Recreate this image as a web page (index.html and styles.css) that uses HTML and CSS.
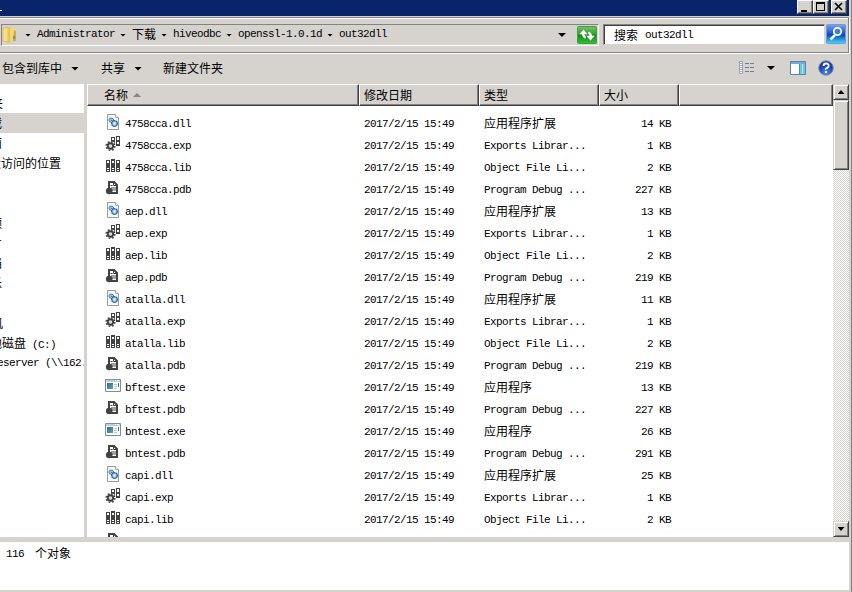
FILE: index.html
```html
<!DOCTYPE html>
<html lang="zh-CN">
<head>
<meta charset="utf-8">
<title>out32dll</title>
<link rel="stylesheet" href="styles.css">
</head>
<body>
<svg width="0" height="0" class="defs" aria-hidden="true">
  <symbol id="i-dll" viewBox="0 0 16 16">
    <path d="M2.5.5h8l3 3v12h-11z" fill="#f7f8fa" stroke="#9a9a9a"/>
    <path d="M10.500.5v3h3" fill="#fff" stroke="#aaa"/>
    <circle cx="6.300" cy="6.300" r="2.100" fill="#d6ebf8" stroke="#3c7bb8" stroke-width="1.400" stroke-dasharray="1.400 .4"/>
    <circle cx="9.500" cy="9.500" r="2.800" fill="#a9d0ee" stroke="#2868aa" stroke-width="1.500" stroke-dasharray="1.600 .4"/>
    <circle cx="6.300" cy="6.300" r=".7" fill="#2868aa"/><circle cx="9.500" cy="9.500" r="1" fill="#fff"/>
  </symbol>
  <symbol id="i-exp" viewBox="0 0 16 16">
    <path d="M6 1h4v7H8.500L6 6zM11 0h4v10h-4z" fill="#424242"/>
    <path d="M7 2h2v2H7zM12 1h2v3h-2zM12 6h2v2h-2z" fill="#fff"/>
    <circle cx="5.500" cy="10" r="5.100" fill="#fff"/>
    <circle cx="5.500" cy="10" r="4.200" fill="none" stroke="#424242" stroke-width="1.800" stroke-dasharray="1.700 1.600"/>
    <circle cx="5.500" cy="10" r="2.700" fill="#ddd" stroke="#424242" stroke-width="1.900"/>
  </symbol>
  <symbol id="i-lib" viewBox="0 0 16 16">
    <path d="M1 2h4v12H1zM6 1h4v13H6zM11 2h4v12h-4z" fill="#424242"/>
    <path d="M2 3h2v2H2zM7 3h2v2H7zM12 3h2v2h-2zM2 10h2v1H2zM7 10h2v1H7zM12 10h2v1h-2zM2 12h2v1H2zM7 12h2v1H7zM12 12h2v1h-2z" fill="#fff"/>
  </symbol>
  <symbol id="i-pdb" viewBox="0 0 16 16">
    <path d="M4 8V2h5l3 3v8H6" fill="#fff" stroke="#424242" stroke-width="2"/>
    <path d="M8.500 2v3.500h4M5.500 5.500h2M6 8h5M7 10h4" fill="none" stroke="#424242"/>
    <circle cx="4.200" cy="11" r="3.300" fill="#424242"/>
  </symbol>
  <symbol id="i-exe" viewBox="0 0 16 16">
    <path d="M.5 1.500h15v12H.5z" fill="#fff" stroke="#7d8d99"/>
    <path d="M1 2h14v2H1z" fill="#c3cdd6"/><path d="M10 2h1v1h-1zM12 2h2v1h-2z" fill="#fff"/>
    <path d="M2 5h6v6H2z" fill="url(#g-exe)"/>
    <path d="M9 6.500h3M9 8.500h3M9 10.500h3" stroke="#bdc6cf"/><path d="M13 5h1v4h-1z" fill="#35788e"/>
  </symbol>
  <defs>
    <linearGradient id="g-exe" x2="1" y2="1"><stop stop-color="#2f68a5"/><stop offset="1" stop-color="#5aae80"/></linearGradient>
    <linearGradient id="g-fold" x2="1"><stop stop-color="#ecd06a"/><stop offset="1" stop-color="#d9b038"/></linearGradient>
    <linearGradient id="g-green" x2="0" y2="1"><stop stop-color="#72c46c"/><stop offset=".45" stop-color="#2fa22c"/><stop offset=".5" stop-color="#118a14"/><stop offset="1" stop-color="#2bc52e"/></linearGradient>
    <linearGradient id="g-blue" x2="0" y2="1"><stop stop-color="#7fa3ea"/><stop offset=".45" stop-color="#2459cf"/><stop offset=".55" stop-color="#0b46c0"/><stop offset="1" stop-color="#3ee0fa"/></linearGradient>
    <radialGradient id="g-help" cy=".8"><stop stop-color="#4e8cf0"/><stop offset="1" stop-color="#1c3fae"/></radialGradient>
  </defs>
</svg>
<div class="window">
  <header class="titlebar">
    <span class="title-edge"></span>
    <button class="cap" aria-label="最小化"><svg width="14" height="12" viewBox="0 0 14 12"><path d="M3 9h6v2H3z"/></svg></button>
    <button class="cap" aria-label="最大化"><svg width="14" height="12" viewBox="0 0 14 12"><path d="M2 1h9v9H2zM3 3v6h7V3z" fill-rule="evenodd"/></svg></button>
    <button class="cap close" aria-label="关闭"><svg width="14" height="12" viewBox="0 0 14 12"><path d="M3 2l7 7M10 2L3 9" stroke="#000" stroke-width="1.700"/></svg></button>
  </header>
  <div class="navbar">
    <div class="address">
      <svg class="folder" width="16" height="18" viewBox="0 0 16 18"><path d="M1 2l5-1v15l-5-1z" fill="#f3df88" stroke="#d8b84c" stroke-width=".8"/><path d="M5.500 2L9 1v15l-3.500 1z" fill="url(#g-fold)"/><path d="M8 2h5v13l-5 1z" fill="#f1d672"/><path d="M12 4l2 1v10h-3z" fill="#d4ac3c"/><path d="M11 10h2v3h-2z" fill="#3f9ce0"/></svg>
      <i class="crumb-arrow first"></i><span class="la">Administrator</span>
      <i class="crumb-arrow"></i><span>下载</span>
      <i class="crumb-arrow"></i><span class="la">hiveodbc</span>
      <i class="crumb-arrow"></i><span class="la">openssl-1.0.1d</span>
      <i class="crumb-arrow"></i><span class="la">out32dll</span>
      <i class="drop"></i>
      <svg class="refresh" width="20" height="18" viewBox="0 0 20 18"><rect x=".5" y=".5" width="19" height="17" rx="1" fill="url(#g-green)" stroke="#4a9b48"/><path d="M6.500 3L2 8.500h2.800q.7 4 4.200 4.300V10q-1.300-.3-1.300-1.500H11zM13.500 15L18 9.500h-2.800q-.7-4-4.200-4.300V8q1.300.3 1.300 1.500H9z" fill="#fff" stroke="#23801f" stroke-width=".4"/></svg>
    </div>
    <div class="search"><span>搜索</span><span class="la">out32dll</span></div>
    <svg class="go" width="20" height="20" viewBox="0 0 20 20"><rect x=".5" y=".5" width="19" height="19" rx="1" fill="url(#g-blue)" stroke="#6f9be0"/><path d="M9 11l-4.500 4.500" stroke="#fff" stroke-width="2.500"/><circle cx="11.500" cy="7.500" r="3.700" fill="#3f7de0" stroke="#fff" stroke-width="1.800"/></svg>
  </div>
  <div class="toolbar">
    <span class="t1">包含到库中</span><i class="drop"></i>
    <span class="t2">共享</span><i class="drop"></i>
    <span class="t3">新建文件夹</span>
    <div class="tools">
      <svg width="16" height="14" viewBox="0 0 16 14"><path d="M.5.500h3v12h-3zM0 4.500h4M0 8.500h4" fill="#fff" stroke="#8898b0" stroke-width=".8"/><path d="M1.500 2h1v1h-1zM1.500 10h1v1h-1z" fill="#4068a0"/><path d="M1.500 6h1v1h-1z" fill="#c02020"/><path d="M6 2.500h4M11 2.500h4M6 6.500h4M11 6.500h4M6 10.500h4M11 10.500h4" stroke="#6a7f98"/></svg>
      <i class="drop"></i>
      <svg class="pane" width="16" height="14" viewBox="0 0 16 14"><path d="M.5.500h15v13H.5z" fill="#fff" stroke="#5585b8"/><path d="M1 1h14v2H1z" fill="#7da9d0"/><path d="M10 3h5v10h-5z" fill="#6ec5dc"/><path d="M9.500 3v10" stroke="#5585b8"/><path d="M12 3h1v10h-1z" fill="#b5e6ef"/></svg>
      <svg class="help" width="16" height="16" viewBox="0 0 16 16"><circle cx="8" cy="8" r="7.300" fill="url(#g-help)" stroke="#8390b0"/><path d="M5.500 6q0-2.500 2.600-2.500T10.700 6Q10.700 7 9 8t-1 1.700M8 11v2" fill="none" stroke="#fff" stroke-width="1.800"/></svg>
    </div>
  </div>
  <main class="main">
    <nav class="side">
      <div class="node w1"><span>收藏夹</span></div>
      <div class="node sel w0"><span>下载</span></div>
      <div class="node w0"><span>桌面</span></div>
      <div class="node w5"><span>最近访问的位置</span></div>
      <div class="node gap"></div><div class="node"></div>
      <div class="node w0"><span>视频</span></div>
      <div class="node w0"><span>图片</span></div>
      <div class="node w0"><span>文档</span></div>
      <div class="node w0"><span>音乐</span></div>
      <div class="node"></div>
      <div class="node w1"><span>计算机</span></div>
      <div class="node w4"><span>本地磁盘<span class="la"> (C:)</span></span></div>
      <div class="node w6"><span class="la">fileserver (\\162.</span></div>
    </nav>
    <section class="list">
      <div class="head">
        <div class="h name">名称<i class="sort"></i></div>
        <div class="h">修改日期</div>
        <div class="h">类型</div>
        <div class="h size">大小</div>
        <div class="h rest"></div>
      </div>
      <div class="rows" id="rows"></div>
    </section>
    <div class="scroll">
      <div class="sb"><i class="up"></i></div>
      <div class="sb thumb"></div>
      <div class="track"></div>
      <div class="sb"><i class="down"></i></div>
    </div>
  </main>
  <footer class="status"><span class="la">116</span><span>个对象</span></footer>
</div>
<script src="app.js"></script>
</body>
</html>
```
FILE: styles.css
```css
* { box-sizing: border-box; }
body {
  margin: 0;
  width: 852px;
  height: 592px;
  overflow: hidden;
  background: #d6d3ce;
  color: #000;
  font: 12px/20px "Noto Sans CJK SC", sans-serif;
}
.defs { position: absolute; }
svg { display: block; flex: none; }
.la {
  font-family: "Liberation Mono", monospace;
  font-size: 11px;
  letter-spacing: -0.6px;
  white-space: pre;
}
.window {
  width: 852px;
  height: 592px;
  padding-right: 2px;
  border-right: 1px solid #808080;
  display: flex;
  flex-direction: column;
}
.titlebar {
  width: 849px;
  height: 16px;
  flex: none;
  background: #08246b;
  display: flex;
  justify-content: flex-end;
  padding-right: 2px;
}
.title-edge { width: 2px; height: 1px; margin: 10px auto 0 0; background: #fff; }
.cap {
  width: 16px;
  height: 14px;
  padding: 0;
  background: #d6d3ce;
  border: 1px solid;
  border-color: #fff #424142 #424142 #fff;
  box-shadow: inset -1px -1px #848284;
}
.cap.close { margin-left: 2px; }

.navbar {
  width: 849px;
  height: 36px;
  flex: none;
  margin-top: 1px;
  border: solid #848284;
  border-width: 1px 1px 1px 0;
  box-shadow: inset 0 1px #fff, 0 1px #fff, 1px 0 #fff;
  padding: 6px 0 0 1px;
  display: flex;
}
.address {
  width: 598px;
  height: 22px;
  border: 1px solid;
  border-color: #848284 #fff #fff #848284;
  display: flex;
  align-items: center;
  line-height: 18px;
}
.address > span { position: relative; top: -1px; }
.drop {
  flex: none;
  width: 8px;
  height: 4px;
  background: #000;
  clip-path: polygon(0 0, 100% 0, 50% 100%);
}
.crumb-arrow { flex: none; width: 17px; height: 3px; background: #000; clip-path: polygon(5px 0, 11px 0, 8px 3px); }
.crumb-arrow.first { width: 19px; clip-path: polygon(7px 0, 13px 0, 10px 3px); }
.address .drop { margin-left: auto; margin-right: 11px; }
.refresh { margin-right: 1px; }
.search {
  width: 222px;
  height: 21px;
  margin-left: 4px;
  padding-left: 10px;
  background: #fff;
  border: 1px solid;
  border-color: #848284 #d6d3ce #d6d3ce #848284;
  box-shadow: inset 1px 1px #424142;
  display: flex;
  gap: 7px;
  line-height: 19px;
}
.search .la { padding-top: 1px; }
.go { margin-left: 1px; }

.toolbar {
  height: 31px;
  flex: none;
  display: flex;
  align-items: center;
  padding-left: 2px;
}
.toolbar > span { margin-top: -2px; }
.toolbar .drop { margin-left: 9px; }
.toolbar .t2 { margin-left: 22px; }
.toolbar .t3 { margin-left: 21px; }
.tools { margin-left: auto; display: flex; align-items: center; padding-right: 15px; margin-top: -1px; }
.tools .drop { margin-left: 12px; }
.pane { margin-left: 15px; }
.help { margin-left: 12px; }

.main { height: 453px; flex: none; display: flex; }
.side { width: 84px; background: #fff; overflow: hidden; padding-top: 9px; }
.node { height: 20px; display: flex; line-height: 20px; overflow: hidden; }
.node span { white-space: pre; }
.node > span { flex: none; }
.sel { background: #d6d3ce; }
.w0 > span { margin-left: -22px; }
.w1 > span { margin-left: -33px; }
.w5 > span { margin-left: -23px; }
.w4 > span { margin-left: -22px; }
.w6 > span { margin-left: -21px; }

.list { width: 746px; margin-left: 3px; background: #fff; display: flex; flex-direction: column; }
.head { height: 22px; flex: none; display: flex; }
.h {
  width: 120px;
  background: #d6d3ce;
  border: 1px solid;
  border-color: #fff #424142 #424142 #fff;
  box-shadow: inset -1px -1px #848284;
  padding-left: 4px;
  line-height: 20px;
}
.h.name { width: 272px; padding-left: 16px; display: flex; align-items: center; }
.h.rest { flex: 1; }
.h.size { width: 80px; }
.sort { width: 8px; height: 4px; margin-left: 5px; background: #848284; clip-path: polygon(50% 0, 100% 100%, 0 100%); }
.rows { flex: 1; padding-top: 6px; overflow: hidden; }
.row {
  height: 22px;
  display: grid;
  grid-template-columns: 38px 239px 120px 120px 67px;
  line-height: 22px;
}
.row svg { width: 16px; height: 16px; margin: 2px 0 0 18px; }
.row .la { padding-top: 1px; }
.row .num { text-align: right; }

.scroll { width: 16px; display: flex; flex-direction: column; }
.sb {
  height: 16px;
  flex: none;
  background: #d6d3ce;
  border: 1px solid;
  border-color: #d6d3ce #424142 #424142 #d6d3ce;
  box-shadow: inset 1px 1px #fff, inset -1px -1px #848284;
  display: flex;
  align-items: center;
  justify-content: center;
}
.sb.thumb { height: 70px; }
.track { flex: 1; background: repeating-conic-gradient(#d6d3ce 0 25%, #fff 0 50%) 0 0 / 2px 2px; }
.up, .down { width: 7px; height: 4px; background: #000; }
.up { clip-path: polygon(50% 0, 100% 100%, 0 100%); }
.down { clip-path: polygon(0 0, 100% 0, 50% 100%); }

.status {
  width: 849px;
  height: 48px;
  flex: none;
  margin-top: 5px;
  background: #fff;
  padding: 1px 0 0 6px;
  display: flex;
  gap: 11px;
}
.status .la { padding-top: 1px; }
```
FILE: app.js
```js
const names = [
  "4758cca.dll", "4758cca.exp", "4758cca.lib", "4758cca.pdb",
  "aep.dll", "aep.exp", "aep.lib", "aep.pdb",
  "atalla.dll", "atalla.exp", "atalla.lib", "atalla.pdb",
  "bftest.exe", "bftest.pdb", "bntest.exe", "bntest.pdb",
  "capi.dll", "capi.exp", "capi.lib", "capi.pdb"
];
const sizes = [14, 1, 2, 227, 13, 1, 2, 219, 11, 1, 2, 219, 13, 227, 26, 291, 25, 1, 2, 227];
const types = {
  dll: ["应用程序扩展", ""],
  exe: ["应用程序", ""],
  exp: ["Exports Librar...", "la"],
  lib: ["Object File Li...", "la"],
  pdb: ["Program Debug ...", "la"]
};

document.getElementById("rows").innerHTML = names.map((name, i) => {
  const ext = name.split(".")[1];
  const [label, cls] = types[ext];
  return `<div class="row"><svg viewBox="0 0 16 16"><use href="#i-${ext}"/></svg>` +
    `<span class="la">${name}</span><span class="la">2017/2/15 15:49</span>` +
    `<span class="${cls}">${label}</span><span class="la num">${sizes[i]} KB</span></div>`;
}).join("");
```
